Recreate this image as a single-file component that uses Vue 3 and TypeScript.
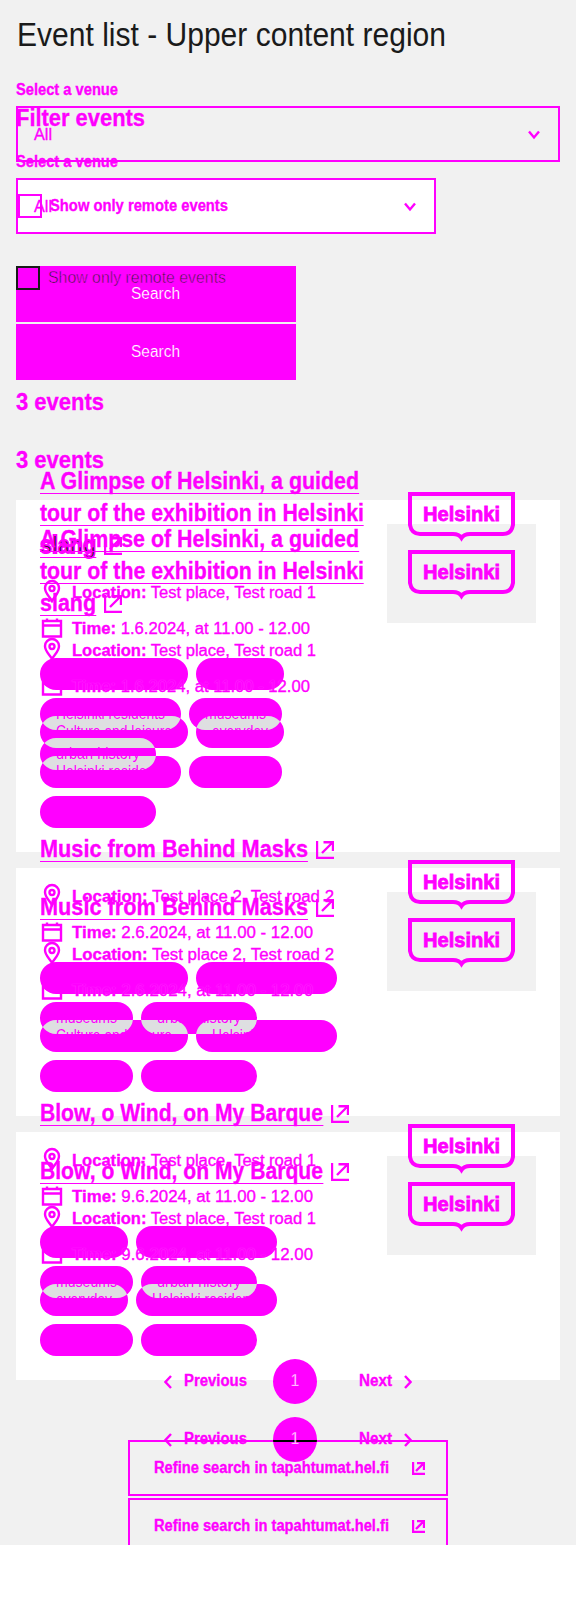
<script setup lang="ts">
interface Line { text: string; width: number }
interface Tag { text: string; x: number; row: number; width: number }
interface EventItem {
  title: Line[]
  place: string
  placeWidth: number
  time: string
  timeWidth: number
  tags: Tag[]
}

const culture = 'Culture and leisure'
const residents = 'Helsinki residents'

const events: EventItem[] = [
  {
    title: [
      { text: 'A Glimpse of Helsinki, a guided', width: 319 },
      { text: 'tour of the exhibition in Helsinki', width: 324 },
      { text: 'slang', width: 56 },
    ],
    place: 'Test place, Test road 1',
    placeWidth: 244,
    time: '1.6.2024, at 11.00 - 12.00',
    timeWidth: 238,
    tags: [
      { text: culture, x: 0, row: 0, width: 148 },
      { text: 'everyday', x: 156, row: 0, width: 88 },
      { text: residents, x: 0, row: 1, width: 141 },
      { text: 'museums', x: 149, row: 1, width: 93 },
      { text: 'urban history', x: 0, row: 2, width: 116 },
    ],
  },
  {
    title: [{ text: 'Music from Behind Masks', width: 268 }],
    place: 'Test place 2, Test road 2',
    placeWidth: 262,
    time: '2.6.2024, at 11.00 - 12.00',
    timeWidth: 241,
    tags: [
      { text: culture, x: 0, row: 0, width: 148 },
      { text: residents, x: 156, row: 0, width: 141 },
      { text: 'museums', x: 0, row: 1, width: 93 },
      { text: 'urban history', x: 101, row: 1, width: 116 },
    ],
  },
  {
    title: [{ text: 'Blow, o Wind, on My Barque', width: 283 }],
    place: 'Test place, Test road 1',
    placeWidth: 244,
    time: '9.6.2024, at 11.00 - 12.00',
    timeWidth: 241,
    tags: [
      { text: 'everyday', x: 0, row: 0, width: 88 },
      { text: residents, x: 96, row: 0, width: 141 },
      { text: 'museums', x: 0, row: 1, width: 93 },
      { text: 'urban history', x: 101, row: 1, width: 116 },
    ],
  },
]

const layers = ['base', 'shifted'] as const

// Vertical distance between the two revisions of the list
const SHIFT = 58

const tagsHeight = (e: EventItem) => (Math.max(...e.tags.map((t) => t.row)) + 1) * 40 - 8

// Condenses or widens a line of text to the given width
const vFit = {
  mounted(el: HTMLElement, binding: { value: number }) {
    const natural = el.getBoundingClientRect().width
    el.style.transform = `scaleX(${binding.value / natural})`
    el.style.marginRight = `${binding.value - natural}px`
  },
}
</script>

<template>
  <main class="stage">
    <h1><span v-fit="429" class="fit">Event list - Upper content region</span></h1>
    <div class="stack">
      <div v-for="layer in layers" :key="layer" class="layer" :class="layer">
        <h2 v-if="layer === 'base'" class="filter-title"><span v-fit="129" class="fit">Filter events</span></h2>
        <div class="label front"><span v-fit="102" class="fit">Select a venue</span></div>
        <div class="select">
          <span v-fit="18" class="fit">All</span>
          <svg width="12" height="10" viewBox="0 0 12 10"><path d="M1 1.5L6 7.5L11 1.5" /></svg>
        </div>
        <div class="check front">
          <i></i><span v-fit="178" class="fit">Show only remote events</span>
        </div>
        <div class="search"><span v-fit="49" class="fit">Search</span></div>
        <h2 class="count"><span v-fit="88" class="fit">3 events</span></h2>

        <article v-for="(event, i) in events" :key="i" class="card">
          <div class="content front">
            <h3>
              <div v-for="(line, n) in event.title" :key="n" class="title-line">
                <span v-fit="line.width" class="fit link" :class="{ worn: layer === 'shifted' && line.text === 'slang' }">{{ line.text }}</span>
                <svg v-if="n === event.title.length - 1" class="ext" width="18" height="18" viewBox="0 0 18 18">
                  <path d="M1 0V17H18M6 12L16 2M7.500 1.200H17V10" />
                </svg>
              </div>
            </h3>
            <div class="meta place">
              <svg width="24" height="24" viewBox="0 0 24 24">
                <path d="M12 22C10 18 5 14.500 5 9a7 7 0 0 1 14 0C19 14.500 14 18 12 22Z" />
                <circle cx="12" cy="9.500" r="2.500" />
              </svg>
              <span v-fit="event.placeWidth" class="fit"><b>Location:</b> {{ event.place }}</span>
            </div>
            <div class="meta time">
              <svg width="24" height="24" viewBox="0 0 24 24">
                <path d="M3 6H21V21.500H3ZM3 10.500H21M7 3.500V6M17 3.500V6" />
              </svg>
              <span v-fit="event.timeWidth" class="fit"><b>Time:</b> {{ event.time }}</span>
            </div>
            <svg class="tags" width="300" :height="tagsHeight(event)">
              <rect v-for="(t, n) in event.tags" :key="n" class="pill" :x="t.x" :y="t.row * 40" :width="t.width" height="32" rx="16" />
              <template v-if="layer === 'base'">
                <clipPath :id="`shared-${i}`">
                  <rect v-for="(t, n) in event.tags" :key="n" :x="t.x" :y="t.row * 40 - SHIFT" :width="t.width" height="32" rx="16" />
                </clipPath>
                <g :clip-path="`url(#shared-${i})`">
                  <rect v-for="(t, n) in event.tags" :key="n" class="shared" :x="t.x" :y="t.row * 40" :width="t.width" height="32" rx="16" />
                  <text v-for="(t, n) in event.tags" :key="`a${n}`" :x="t.x + 16" :y="t.row * 40 + 21 - SHIFT" :textLength="t.width - 32" lengthAdjust="spacingAndGlyphs">{{ t.text }}</text>
                </g>
              </template>
              <text v-for="(t, n) in event.tags" :key="`b${n}`" :x="t.x + 16" :y="t.row * 40 + 21" :textLength="t.width - 32" lengthAdjust="spacingAndGlyphs">{{ t.text }}</text>
            </svg>
          </div>
          <div class="media">
            <svg class="logo front" width="107" height="50" viewBox="0 0 107 50">
              <path d="M2 2H105V33Q103.500 42 95 42H62Q56 42 53.500 46Q51 42 45 42H12Q3.500 42 2 33Z" />
              <text x="15" y="29" textLength="77" lengthAdjust="spacingAndGlyphs">Helsinki</text>
            </svg>
          </div>
        </article>

        <nav class="pager front">
          <svg width="8" height="14" viewBox="0 0 8 14"><path d="M7 1L1.500 7L7 13" /></svg>
          <span v-fit="63" class="fit prev">Previous</span>
          <span class="current">1</span>
          <span v-fit="33" class="fit next">Next</span>
          <svg width="8" height="14" viewBox="0 0 8 14"><path d="M1 1L6.500 7L1 13" /></svg>
        </nav>
        <div class="refine">
          <span v-fit="235" class="fit">Refine search in tapahtumat.hel.fi</span>
          <svg width="13" height="13" viewBox="0 0 13 13"><path d="M1 0V12H13M4 9L12 1M5 1H12V8" /></svg>
        </div>
      </div>
    </div>
  </main>
</template>

<style>
body {
  margin: 0;
  background: #fff;
}
</style>

<style scoped>
.stage {
  box-sizing: border-box;
  height: 1545px;
  padding: 15px 16px 0;
  overflow: hidden;
  background: #f1f1f1;
  color: #f0f;
  font: 16px/24px "Liberation Sans", Arial, sans-serif;
}

h1, h2, h3 {
  margin: 0;
}

h1 {
  height: 65px;
  padding-left: 1px;
  color: #1a1a1a;
  font-size: 33px;
  font-weight: 400;
  line-height: 39px;
}

h2, h3 {
  font-size: 24px;
  font-weight: 700;
  line-height: 32px;
}

svg {
  display: block;
  flex: none;
  fill: none;
  stroke: #f0f;
  stroke-width: 2.4;
}

.fit {
  display: inline-block;
  flex: none;
  white-space: nowrap;
  transform-origin: 0 50%;
}

.stack {
  display: grid;
  grid-template-columns: 544px;
  align-items: start;
  -webkit-text-stroke: 0.35px #f0f;
}

.layer {
  grid-area: 1 / 1;
}

.shifted {
  position: relative;
  z-index: 1;
}

.base .front {
  position: relative;
  z-index: 2;
}

.filter-title {
  padding: 22px 0 18px;
}

.label {
  height: 20px;
  margin-bottom: 6px;
  font-weight: 700;
  line-height: 20px;
}

.select {
  box-sizing: border-box;
  display: flex;
  align-items: center;
  justify-content: space-between;
  height: 56px;
  padding: 1px 18px 0 16px;
  border: 2px solid #f0f;
}

.base .select {
  width: 420px;
  background: #fff;
}

.check {
  display: flex;
  gap: 8px;
  height: 24px;
  margin-top: 32px;
  font-weight: 700;
}

.check i {
  box-sizing: border-box;
  width: 24px;
  height: 24px;
  border: 2px solid #f0f;
}

.shifted .check {
  padding-left: 2px;
}

.base .check {
  color: #1a1a1a;
  font-weight: 400;
  -webkit-text-stroke: 0.6px #f0f;
}

.base .check i {
  border-color: #1a1a1a;
}

.search {
  display: flex;
  align-items: center;
  width: 165px;
  height: 56px;
  margin-top: 48px;
  padding-left: 115px;
  background: #f0f;
  color: #fff;
  -webkit-text-stroke: 0.2px #f0f;
}

.base .search {
  margin-top: 34px;
}

.count {
  padding: 64px 0 24px;
}

.card {
  display: flex;
  justify-content: space-between;
  margin-bottom: 16px;
  padding: 24px;
}

.base .card {
  background: #fff;
}

.title-line {
  display: flex;
  align-items: center;
  height: 32px;
}

.link {
  height: 27px;
  line-height: 29px;
  margin-top: -4px;
  border-bottom: 1px solid #f0f;
}

.worn {
  color: #1a1a1a;
  -webkit-text-stroke: 1.800px #f0f;
}

.ext {
  margin: 0 0 0 8px;
}

.meta {
  display: flex;
  gap: 8px;
  height: 24px;
  line-height: 26px;
}

.place {
  margin-top: 18px;
}

.place svg {
  margin-top: -1px;
}

.time {
  margin: 12px 0 18px;
}

.meta svg {
  margin-top: -1px;
}

.base .time {
  text-shadow: 0 0 1px rgba(255, 255, 255, 0.4);
}

.tags text {
  fill: #f0f;
  stroke: none;
}

.pill {
  fill: #f0f;
  stroke: none;
}

.shared {
  fill: #dedfe1;
  stroke: none;
}

.media {
  box-sizing: border-box;
  width: 149px;
  height: 99px;
  padding: 26px 0 0 21px;
}

.base .media {
  background: #f1f1f1;
}

.logo {
  stroke-width: 4;
}

.logo text {
  fill: #f0f;
  stroke-width: 0.8;
  font-size: 20px;
  font-weight: 700;
}

.pager {
  display: flex;
  align-items: center;
  height: 45px;
  margin-top: 37px;
  padding-left: 148px;
  font-weight: 700;
  line-height: 22px;
}

.pager .fit {
  margin-top: -2px;
}

.prev {
  margin-left: 12px;
}

.current {
  width: 44px;
  height: 45px;
  margin: 0 42px 0 26px;
  border-radius: 50%;
  background: #f0f;
  color: #fff;
  font-weight: 400;
  line-height: 44px;
  text-align: center;
}

.base .current {
  background: linear-gradient(#f0f 23px, #000 23px, #000 25px, #f0f 25px);
}

.pager svg:last-child {
  margin-left: 12px;
}

.refine {
  box-sizing: border-box;
  display: flex;
  align-items: center;
  justify-content: space-between;
  width: 320px;
  height: 56px;
  margin: 36px auto 0;
  padding: 0 21px 0 24px;
  border: 2px solid #f0f;
  font-weight: 700;
}
</style>
